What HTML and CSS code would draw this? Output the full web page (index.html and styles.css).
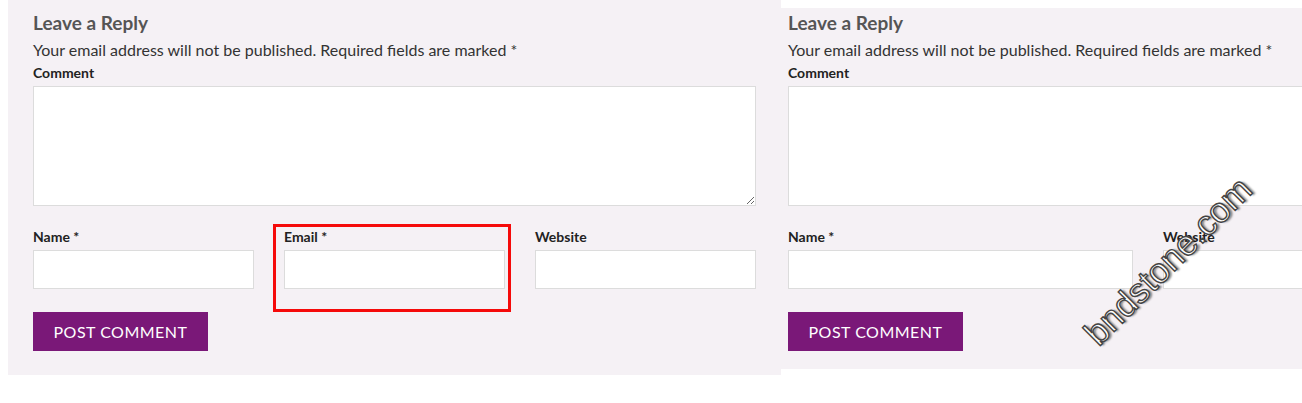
FILE: index.html
```html
<!DOCTYPE html>
<html>
<head>
<meta charset="utf-8">
<link rel="stylesheet" href="styles.css">
</head>
<body>
<div class="page">
  <section class="panel panel-left">
    <form class="reply reply-three">
      <h3 class="reply-title">Leave a Reply</h3>
      <p class="note">Your email address will not be published. Required fields are marked *</p>
      <label class="label">Comment</label>
      <textarea class="comment"></textarea>
      <div class="fields">
        <div class="field"><label class="label">Name *</label><input class="input" type="text"></div>
        <div class="field"><label class="label">Email *</label><input class="input" type="text"></div>
        <div class="field"><label class="label">Website</label><input class="input" type="text"></div>
      </div>
      <button type="button" class="submit">Post Comment</button>
    </form>
    <div class="highlight"></div>
  </section>
  <section class="panel panel-right">
    <form class="reply reply-two">
      <h3 class="reply-title">Leave a Reply</h3>
      <p class="note">Your email address will not be published. Required fields are marked *</p>
      <label class="label">Comment</label>
      <textarea class="comment no-resize"></textarea>
      <div class="fields">
        <div class="field"><label class="label">Name *</label><input class="input" type="text"></div>
        <div class="field"><label class="label">Website</label><input class="input" type="text"></div>
      </div>
      <button type="button" class="submit">Post Comment</button>
    </form>
  </section>
  <div class="watermark">bndstone.com</div>
</div>
</body>
</html>
```
FILE: styles.css
```css
html, body {
  margin: 0;
  padding: 0;
  background: #ffffff;
}
body {
  font-family: Lato, "Liberation Sans", sans-serif;
  color: #333;
}
.page {
  position: relative;
  display: flex;
  align-items: flex-start;
  width: 1302px;
  height: 403px;
  overflow: hidden;
}
.panel {
  background: #f5f1f5;
  box-sizing: border-box;
  flex: none;
}
.panel-left {
  position: relative;
  margin-left: 8px;
  width: 773px;
  height: 375px;
  padding: 0 25px;
}
.panel-right {
  margin-top: 8px;
  width: 521px;
  height: 361px;
  padding: 0 0 0 7px;
  overflow: hidden;
}
.reply {
  display: flex;
  flex-direction: column;
  align-items: flex-start;
}
.reply-three { width: 723px; padding-top: 11px; }
.reply-two { width: 720px; padding-top: 3px; }
.reply-title {
  margin: 0;
  font-size: 19px;
  line-height: 24px;
  font-weight: 700;
  color: #555;
}
.note {
  margin: 4px 0 0;
  font-size: 16px;
  line-height: 22px;
  color: #333;
}
.label {
  display: block;
  font-size: 14px;
  line-height: 18px;
  font-weight: 700;
  color: #222;
}
.reply > .label { margin-top: 3px; }
.comment {
  display: block;
  margin: 4px 0 0;
  width: 100%;
  height: 120px;
  box-sizing: border-box;
  border: 1px solid #dcdcdc;
  background: #fff;
  padding: 0;
  font: inherit;
  resize: both;
}
.no-resize { resize: none; }
.fields {
  display: grid;
  gap: 30px;
  width: 100%;
  margin-top: 22px;
}
.reply-three .fields { grid-template-columns: repeat(3, 1fr); }
.reply-two .fields { grid-template-columns: repeat(2, 1fr); }
.field {
  display: flex;
  flex-direction: column;
}
.input {
  margin-top: 4px;
  height: 39px;
  box-sizing: border-box;
  border: 1px solid #dcdcdc;
  background: #fff;
  padding: 0;
  width: 100%;
}
.submit {
  margin-top: 23px;
  height: 39px;
  padding: 0 0 1px;
  border: none;
  background: #7a1878;
  color: #fff;
  font-family: Lato, "Liberation Sans", sans-serif;
  font-size: 16px;
  letter-spacing: 0.5px;
  text-transform: uppercase;
  width: 175px;
}
.highlight {
  position: absolute;
  left: 265px;
  top: 224px;
  width: 238px;
  height: 88px;
  box-sizing: border-box;
  border: 3px solid #f50a0a;
}
.watermark {
  position: absolute;
  left: 1048px;
  top: 241px;
  width: 240px;
  text-align: center;
  font-family: "Liberation Sans", Arial, sans-serif;
  font-size: 35px;
  line-height: 40px;
  color: #fff;
  -webkit-text-stroke: 1.4px #444;
  text-shadow: 2px 2px 2px rgba(0,0,0,0.45);
  transform: rotate(-45deg);
  transform-origin: 50% 50%;
}
```
